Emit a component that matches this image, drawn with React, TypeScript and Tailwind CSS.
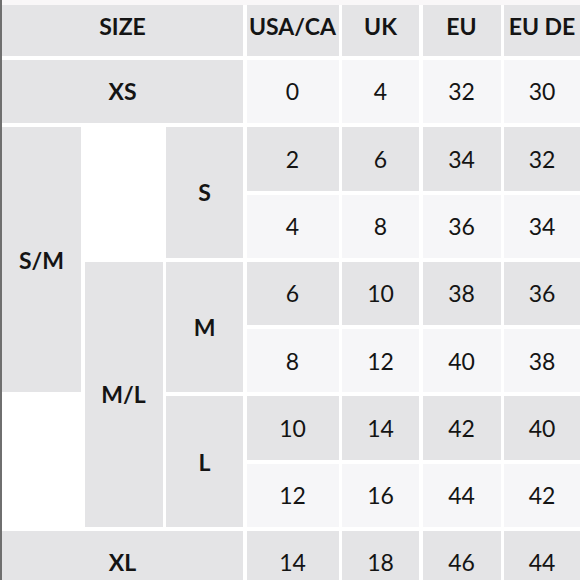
import React from 'react';

type Row = { values: string[]; shade: 'dark' | 'light' };

const HEADERS = ['USA/CA', 'UK', 'EU', 'EU DE'];

// One entry per grid row after the header (XS down to XL)
const ROWS: Row[] = [
  { values: ['0', '4', '32', '30'], shade: 'light' },
  { values: ['2', '6', '34', '32'], shade: 'dark' },
  { values: ['4', '8', '36', '34'], shade: 'light' },
  { values: ['6', '10', '38', '36'], shade: 'dark' },
  { values: ['8', '12', '40', '38'], shade: 'light' },
  { values: ['10', '14', '42', '40'], shade: 'dark' },
  { values: ['12', '16', '44', '42'], shade: 'light' },
  { values: ['14', '18', '46', '44'], shade: 'dark' },
];

const ROW_START = [
  'row-start-2',
  'row-start-3',
  'row-start-4',
  'row-start-5',
  'row-start-6',
  'row-start-7',
  'row-start-8',
  'row-start-9',
];

const COL_START = ['col-start-4', 'col-start-5', 'col-start-6', 'col-start-7'];

function Cell({
  className = '',
  bold = false,
  children,
}: {
  className?: string;
  bold?: boolean;
  children?: React.ReactNode;
}) {
  return (
    <div
      className={`flex items-center justify-center text-[23px] text-[#141414] ${
        bold ? 'font-bold' : 'font-normal'
      } ${className}`}
    >
      {children}
    </div>
  );
}

export default function App() {
  return (
    <div
      className="w-[580px] h-[580px] overflow-hidden bg-white border-l-2 border-[#6f6f6f]"
      style={{ fontFamily: 'Lato, "Open Sans", sans-serif' }}
    >
      {/* thin band above the header */}
      <div className="h-[5px] bg-[#f9f7f8]" />

      <div className="grid grid-cols-[79px_78px_77px_92px_77px_78px_1fr] grid-rows-[51px_repeat(8,63.3px)] gap-x-[3.5px] gap-y-[4px] bg-white">
        {/* Header - labels sit a little above centre */}
        <Cell bold className="col-start-1 col-span-3 row-start-1 pb-[8px] bg-[#e4e4e6]">
          SIZE
        </Cell>
        {HEADERS.map((h, i) => (
          <Cell key={h} bold className={`${COL_START[i]} row-start-1 pb-[8px] bg-[#e4e4e6]`}>
            {h}
          </Cell>
        ))}

        {/* Size labels */}
        <Cell bold className="col-start-1 col-span-3 row-start-2 bg-[#e4e4e6]">
          XS
        </Cell>
        <Cell bold className="col-start-1 row-start-3 row-span-4 bg-[#e4e4e6]">
          S/M
        </Cell>
        <Cell bold className="col-start-3 row-start-3 row-span-2 bg-[#e4e4e6]">
          S
        </Cell>
        <Cell bold className="col-start-2 row-start-5 row-span-4 bg-[#e4e4e6]">
          M/L
        </Cell>
        <Cell bold className="col-start-3 row-start-5 row-span-2 bg-[#e4e4e6]">
          M
        </Cell>
        <Cell bold className="col-start-3 row-start-7 row-span-2 bg-[#e4e4e6]">
          L
        </Cell>
        <Cell bold className="col-start-1 col-span-3 row-start-9 bg-[#e4e4e6]">
          XL
        </Cell>

        {/* Measurements */}
        {ROWS.map((row, r) =>
          row.values.map((v, c) => (
            <Cell
              key={`${r}-${c}`}
              className={`${COL_START[c]} ${ROW_START[r]} ${
                row.shade === 'dark' ? 'bg-[#e4e4e6]' : 'bg-[#f6f6f8]'
              }`}
            >
              {v}
            </Cell>
          ))
        )}
      </div>
    </div>
  );
}
